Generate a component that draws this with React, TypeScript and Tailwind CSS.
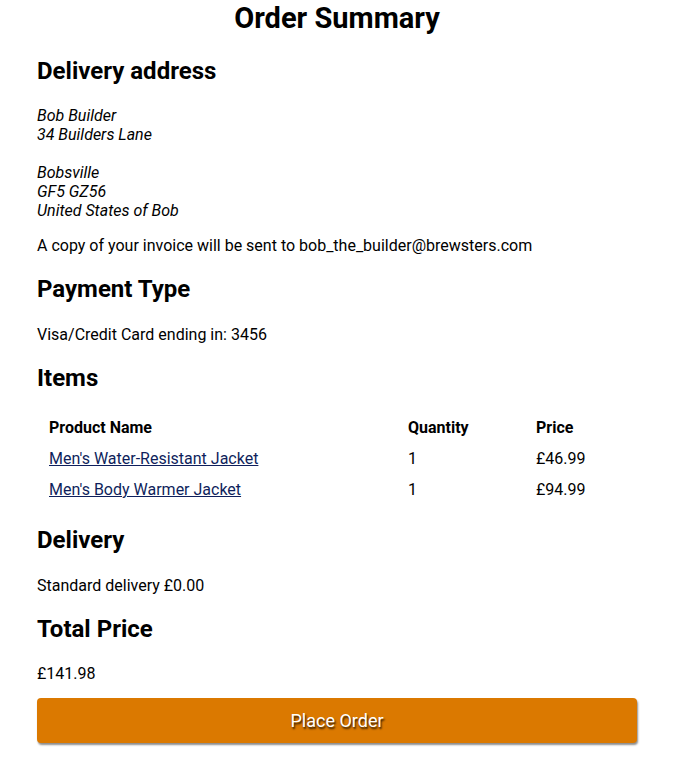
import React from "react";

const items = [
  { name: "Men's Water-Resistant Jacket", qty: 1, price: "£46.99" },
  { name: "Men's Body Warmer Jacket", qty: 1, price: "£94.99" },
];

function Heading({ children, className = "" }: { children: React.ReactNode; className?: string }) {
  return <h2 className={`text-[24px] font-bold leading-[30px] ${className}`}>{children}</h2>;
}

export default function App() {
  return (
    <div className="bg-white text-black text-[16px] font-['Roboto',sans-serif]">
      <div className="ml-[37px] w-[600px] pb-4">
        <h1 className="text-[29px] font-bold text-center leading-[37px] mb-[19px]">Order Summary</h1>

        <Heading className="mb-[20px]">Delivery address</Heading>
        <p className="italic leading-[19px]">
          Bob Builder
          <br />
          34 Builders Lane
          <br />
          <br />
          Bobsville
          <br />
          GF5 GZ56
          <br />
          United States of Bob
        </p>
        <p className="leading-[19px] mt-4">A copy of your invoice will be sent to bob_the_builder@brewsters.com</p>

        <Heading className="mt-[19px] mb-[21px]">Payment Type</Heading>
        <p className="leading-[19px]">Visa/Credit Card ending in: 3456</p>

        <Heading className="mt-[19px] mb-[18px]">Items</Heading>
        <table className="w-full border-separate border-spacing-[2px] text-left">
          <thead>
            <tr className="leading-[19px]">
              <th className="px-[10px] py-[5px] font-bold w-[357px]">Product Name</th>
              <th className="px-[10px] py-[5px] font-bold w-[126px]">Quantity</th>
              <th className="px-[10px] py-[5px] font-bold">Price</th>
            </tr>
          </thead>
          <tbody>
            {items.map((item) => (
              <tr key={item.name} className="leading-[19px]">
                <td className="px-[10px] py-[5px]">
                  <a href="#" className="underline text-[#0f1f5c]">
                    {item.name}
                  </a>
                </td>
                <td className="px-[10px] py-[5px]">{item.qty}</td>
                <td className="px-[10px] py-[5px]">{item.price}</td>
              </tr>
            ))}
          </tbody>
        </table>

        <Heading className="mt-[19px] mb-[21px]">Delivery</Heading>
        <p className="leading-[19px]">Standard delivery £0.00</p>

        <Heading className="mt-[19px] mb-[20px]">Total Price</Heading>
        <p className="leading-[19px]">£141.98</p>

        <button className="mt-[15px] w-full h-[45px] rounded-[4px] bg-[#db7900] text-white text-[18px] shadow-[1px_2px_2px_rgba(0,0,0,0.45)] [text-shadow:1px_2px_2px_rgba(0,0,0,0.8)]">
          Place Order
        </button>
      </div>
    </div>
  );
}
